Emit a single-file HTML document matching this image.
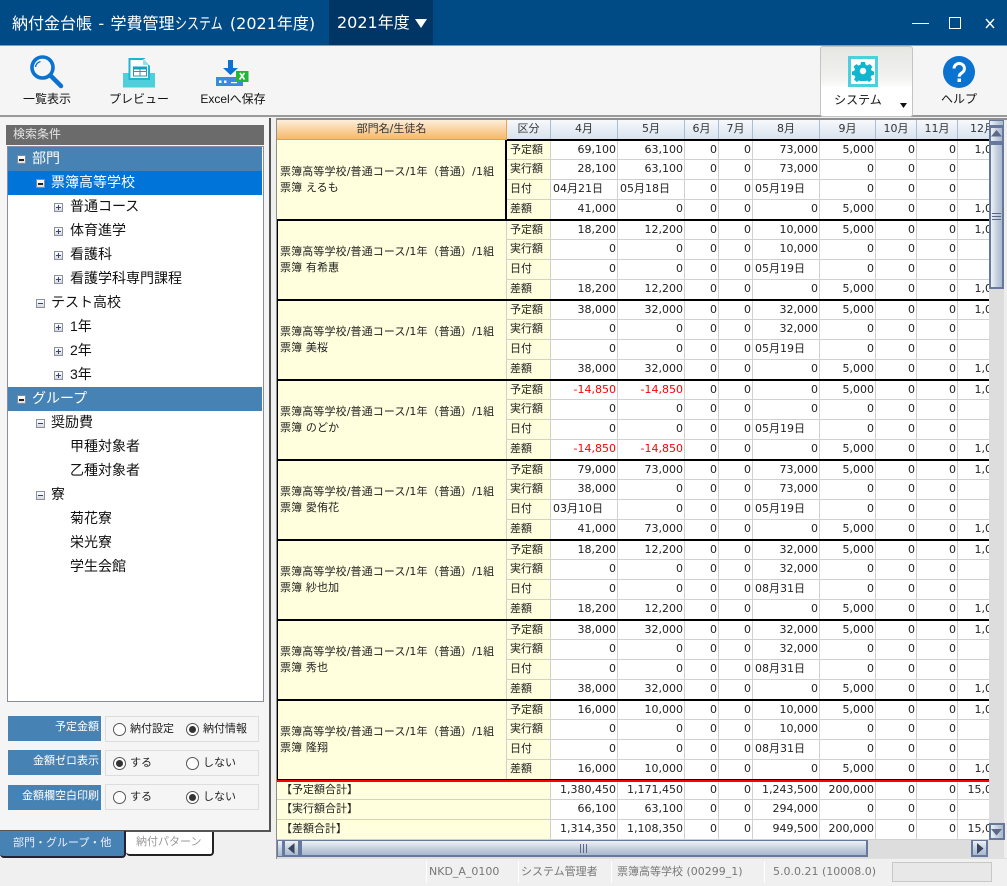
<!DOCTYPE html>
<html lang="ja"><head><meta charset="utf-8"><title>納付金台帳</title>
<style>
*{box-sizing:border-box}
html,body{margin:0;padding:0}
body{width:1007px;height:886px;position:relative;overflow:hidden;background:#f0f0f0;font-family:"DejaVu Sans","Noto Sans CJK JP",sans-serif;color:#111}
.a{position:absolute}
.j{font-family:"Liberation Sans","Noto Sans CJK JP",sans-serif}
.t{position:absolute;white-space:nowrap;line-height:1}
#title{left:0;top:0;width:1007px;height:45px;background:#004a85}
#tb{left:0;top:45px;width:1007px;height:72px;background:#f5f5f5;border-top:1px solid #8c9aa8;border-bottom:2px solid #9a9a9a}
.tl{font:12px/14px "Liberation Sans","Noto Sans CJK JP",sans-serif;color:#111;text-align:center;position:absolute;top:92px;white-space:nowrap}
#lp{left:0;top:118px;width:271px;height:714px;background:#f5f5f5;border-right:2px solid #555;border-bottom:2px solid #555}
#tree{left:7px;top:146px;width:257px;height:556px;background:#fff;border:1px solid #8a8d9c}
.r{position:absolute;left:8px;width:254px;height:24px;font:14px/22px "Liberation Sans","Noto Sans CJK JP",sans-serif;color:#111;white-space:nowrap}
.r span{position:absolute;top:0}
.r i{position:absolute;top:8px;width:9px;height:9px;border:1px solid #8b8f9e;background:linear-gradient(#fff,#d8dae2)}
.r i:before{content:"";position:absolute;left:1px;top:3px;width:5px;height:1px;background:#33457a}
.r i.p:after{content:"";position:absolute;left:3px;top:1px;width:1px;height:5px;background:#33457a}
.lv0 i{left:9px}.lv0 span{left:24px}
.lv1 i{left:28px}.lv1 span{left:43px}
.lv2 i{left:46px}.lv2 span{left:62px}
.h{background:#4682b4;color:#fff}.s{background:#0074d9;color:#fff}
.h i,.s i{background:linear-gradient(#fff,#ddd);border-color:#7f8aa0}
.h i:before,.s i:before{background:#222;height:2px}
.lab{position:absolute;left:8px;width:93px;height:25px;background:#4682b4;color:#fff;font:11px/23px "Liberation Sans","Noto Sans CJK JP",sans-serif;text-align:right;padding-right:2px;white-space:nowrap}
.box{position:absolute;left:105px;width:154px;height:26px;border:1px solid #ddd;background:#f5f5f5}
.rd{position:absolute;width:13px;height:13px;border-radius:50%;border:1px solid #555;background:#fff}
.rd.on:after{content:"";position:absolute;left:2px;top:2px;width:7px;height:7px;border-radius:50%;background:#333}
.rt{position:absolute;font:11px/14px "Liberation Sans","Noto Sans CJK JP",sans-serif;color:#222;white-space:nowrap}
#gw{left:276px;top:118px;width:731px;height:741px;border-top:2px solid #8f8f8f;border-left:1px solid #8f8f8f;background:#e0e0e0}
#gc{left:277px;top:120px;width:712px;height:720px;overflow:hidden;background:#fff}
table{border-collapse:separate;border-spacing:0;table-layout:fixed;width:731px;font:11px/14px "DejaVu Sans","Noto Sans CJK JP",sans-serif;color:#222}
td,th{height:20px;padding:0 1px 1px 0;border-right:1px solid #d0d0d0;border-bottom:1px solid #d0d0d0;text-align:right;white-space:nowrap;overflow:hidden;font-weight:normal}
tr:nth-child(4n+2) td:not(.n){padding-top:2px}
th{background:linear-gradient(#f7f9fc,#d8e2ee);border-right:1px solid #a6bdd3;border-bottom:1px solid #8aa4bf;text-align:center;padding:0 0 2px 0;color:#333}
th.o{background:linear-gradient(#fdeeda,#f6b868);border-bottom:1px solid #f59a2e;border-right:1px solid #f5a33e}
td.n{background:#ffffdd;text-align:left;padding:0 0 0 3px;line-height:16px;font-size:11px;letter-spacing:.12px}
td.k{background:#ffffdd;text-align:left;padding-left:3px;padding-right:0}
td.d{text-align:left;padding-left:2px}
td.m{color:#f00}
td.tt{background:#ffffdd;text-align:left;padding-left:4px;padding-right:0}
.bl{position:absolute;left:277px;width:712px;height:2px;background:#000}
.sb{background:linear-gradient(90deg,#eef2f7,#c3cfdf 55%,#aab8cc);border:solid #66789e;border-width:2px}
.sh{background:linear-gradient(#eef2f7,#c3cfdf 55%,#aab8cc);border:solid #66789e;border-width:1px 2px 2px}
.st{position:absolute;top:872px;transform:translateY(-50%);font:11px/14px "DejaVu Sans","Noto Sans CJK JP",sans-serif;color:#777;white-space:nowrap}
.sp{position:absolute;top:861px;width:1px;height:22px;background:#fff}
</style></head><body>

<div id="title" class="a"></div>
<div class="a" style="left:329px;top:0;width:104px;height:45px;background:#003666"></div>
<div class="t" style="left:12px;top:16px;font-size:16px;color:#fff;word-spacing:1.300px">納付金台帳 - 学費管理<span style="display:inline-block;width:49px;overflow:visible"><span style="display:inline-block;transform:scaleX(.75);transform-origin:0 50%">システム</span></span> (2021年度)</div>
<div class="t" style="left:337px;top:15px;font-size:16px;color:#fff">2021年度</div>
<svg class="a" style="left:415px;top:19px" width="12" height="9"><path d="M0 0H12L6 9Z" fill="#fff"/></svg>
<svg class="a" style="left:905px;top:10px" width="100" height="26" fill="none" stroke="#fff">
<path d="M7 13.500H24" stroke-width="1"/><rect x="44.500" y="7.500" width="11" height="11" stroke-width="1"/><path d="M81 9L89 18M89 9L81 18" stroke-width="1.400"/></svg>

<div id="tb" class="a"></div>
<svg class="a" style="left:26px;top:54px" width="40" height="36" fill="none">
<circle cx="16.500" cy="13.500" r="10.500" stroke="#0a72cf" stroke-width="3.600"/><path d="M9.500 13a7 7 0 0 1 5-5.500" stroke="#0a72cf" stroke-width="1.400"/><path d="M25 22L35 32" stroke="#0a72cf" stroke-width="4.500" stroke-linecap="round"/></svg>
<svg class="a" style="left:123px;top:58px" width="32" height="30">
<rect x="0" y="15" width="32" height="14.500" fill="#4dd0dc"/><path d="M6.500 1H21L26 6V21H6.500Z" fill="#fff" stroke="#1fb5cf" stroke-width="2"/><path d="M20 1L27 1 27 8Z" fill="#f5f5f5"/><path d="M20 2V7H26" fill="#8fe0ea"/><rect x="10.500" y="9" width="13" height="9" fill="#fff" stroke="#1a9fbf" stroke-width="1"/><path d="M10.500 13.500H23.500M17 9V18" stroke="#1a9fbf" stroke-width="1"/><rect x="11" y="9.500" width="12" height="2" fill="#1a9fbf"/></svg>
<div class="tl" style="left:20px;width:54px">一覧表示</div>
<div class="tl" style="left:109px;width:60px">プレビュー</div>
<div class="tl" style="left:198px;width:70px">Excelへ保存</div>
<svg class="a" style="left:216px;top:59px" width="34" height="28">
<path d="M12 1H17V9H22L14.500 16 7 9H12Z" fill="#0a72cf"/><rect x="0" y="18" width="27" height="9" fill="#3a8ae0"/><rect x="3" y="21.500" width="2.500" height="2.500" fill="#fff"/><rect x="8" y="21.500" width="2.500" height="2.500" fill="#fff"/><rect x="15" y="23" width="6" height="1.200" fill="#fff"/><rect x="20" y="12" width="12.500" height="11" fill="#1fb83a"/><path d="M23.500 20.500L28.500 14M24 14L28.500 20.500" stroke="#fff" stroke-width="1.600" fill="none"/></svg>

<div class="a" style="left:820px;top:46px;width:93px;height:71px;border:1px solid #c4c4c4;border-radius:3px;background:linear-gradient(#e6e6e3,#f2f2f0 45%,#fff 60%,#fff)"></div>
<svg class="a" style="left:848px;top:56px" width="31" height="31">
<rect x="1.500" y="1.500" width="27" height="28" fill="#fff" stroke="#4dd0dc" stroke-width="3"/>
<path d="M15 15.500m-3.200 0a3.200 3.200 0 1 0 6.400 0a3.200 3.200 0 1 0-6.400 0ZM13 6.500H17L17.600 9.200 19.400 10 21.800 8.600 24.500 11.300 23 13.600 23.800 15.400 26 16V19.500L23.400 20 22.600 21.800 24 24 21.200 26.500 19 25 17.200 25.800 16.800 25.500H13.200L12.800 25.800 11 25 8.800 26.500 6 24 7.400 21.800 6.600 20 4 19.500V16L6.200 15.400 7 13.600 5.500 11.300 8.200 8.600 10.600 10 12.400 9.200Z" fill="#10b5cf" fill-rule="evenodd" transform="translate(0 -.5)"/></svg>
<div class="tl" style="left:830px;width:56px;top:93px">システム</div>
<svg class="a" style="left:900px;top:103px" width="7" height="5"><path d="M0 0H7L3.500 5Z" fill="#111"/></svg>
<svg class="a" style="left:943px;top:56px" width="32" height="32"><circle cx="16" cy="16" r="16" fill="#0a72cf"/><path d="M11 12.500a5.200 5 0 1 1 8 4.200c-1.800 1.200-2.800 2-2.800 4" fill="none" stroke="#fff" stroke-width="3"/><rect x="14.500" y="22.500" width="3.500" height="3.500" fill="#fff"/></svg>
<div class="tl" style="left:937px;width:44px">ヘルプ</div>

<div id="lp" class="a"></div>
<div class="a" style="left:6px;top:125px;width:258px;height:20px;background:#6b6b6b"></div>
<div class="t j" style="left:13px;top:128px;font-size:12px;color:#e4e4e4">検索条件</div>
<div id="tree" class="a"></div>
<div class="r lv0 h" style="top:147px;height:24px"><i></i><span>部門</span></div>
<div class="r lv1 s" style="top:171px"><i></i><span>票簿高等学校</span></div>
<div class="r lv2" style="top:195px"><i class="p"></i><span>普通コース</span></div>
<div class="r lv2" style="top:219px"><i class="p"></i><span>体育進学</span></div>
<div class="r lv2" style="top:243px"><i class="p"></i><span>看護科</span></div>
<div class="r lv2" style="top:267px"><i class="p"></i><span>看護学科専門課程</span></div>
<div class="r lv1" style="top:291px"><i></i><span>テスト高校</span></div>
<div class="r lv2" style="top:315px"><i class="p"></i><span>1年</span></div>
<div class="r lv2" style="top:339px"><i class="p"></i><span>2年</span></div>
<div class="r lv2" style="top:363px"><i class="p"></i><span>3年</span></div>
<div class="r lv0 h" style="top:387px"><i></i><span>グループ</span></div>
<div class="r lv1" style="top:411px"><i></i><span>奨励費</span></div>
<div class="r lv2" style="top:435px"><span>甲種対象者</span></div>
<div class="r lv2" style="top:459px"><span>乙種対象者</span></div>
<div class="r lv1" style="top:483px"><i></i><span>寮</span></div>
<div class="r lv2" style="top:507px"><span>菊花寮</span></div>
<div class="r lv2" style="top:531px"><span>栄光寮</span></div>
<div class="r lv2" style="top:555px"><span>学生会館</span></div>

<div class="lab" style="top:716px">予定金額</div><div class="box" style="top:716px"></div>
<div class="rd" style="left:113px;top:723px"></div><div class="rt" style="left:130px;top:722px">納付設定</div>
<div class="rd on" style="left:186px;top:723px"></div><div class="rt" style="left:203px;top:722px">納付情報</div>
<div class="lab" style="top:750px">金額ゼロ表示</div><div class="box" style="top:750px"></div>
<div class="rd on" style="left:113px;top:757px"></div><div class="rt" style="left:130px;top:756px">する</div>
<div class="rd" style="left:186px;top:757px"></div><div class="rt" style="left:203px;top:756px">しない</div>
<div class="lab" style="top:785px">金額欄空白印刷</div><div class="box" style="top:784px"></div>
<div class="rd" style="left:113px;top:791px"></div><div class="rt" style="left:130px;top:790px">する</div>
<div class="rd on" style="left:186px;top:791px"></div><div class="rt" style="left:203px;top:790px">しない</div>

<div class="a" style="left:126px;top:832px;width:88px;height:24px;background:#fff;border-right:2px solid #222;border-bottom:2px solid #222;border-radius:0 0 4px 4px"></div>
<div class="t j" style="left:136px;top:837px;font-size:11px;color:#999">納付パターン</div>
<div class="a" style="left:0;top:831px;width:126px;height:27px;background:#4682b4;border-right:2px solid #223;border-bottom:2px solid #223;border-radius:0 0 4px 4px"></div>
<div class="t j" style="left:13px;top:838px;font-size:11px;color:#eef">部門・グループ・他</div>

<div id="gw" class="a"></div>
<div id="gc" class="a">
<table>
<colgroup><col style="width:230px"><col style="width:44px"><col style="width:67px"><col style="width:67px"><col style="width:34px"><col style="width:34px"><col style="width:67px"><col style="width:56px"><col style="width:41px"><col style="width:41px"><col style="width:50px"></colgroup>
<tr><th class="o">部門名/生徒名</th><th>区分</th><th>4月</th><th>5月</th><th>6月</th><th>7月</th><th>8月</th><th>9月</th><th>10月</th><th>11月</th><th>12月</th></tr>

<tr><td class="n" rowspan="4">票簿高等学校/普通コース/1年（普通）/1組<br>票簿 えるも</td><td class="k">予定額</td><td>69,100</td><td>63,100</td><td>0</td><td>0</td><td>73,000</td><td>5,000</td><td>0</td><td>0</td><td>1,000</td></tr>
<tr><td class="k">実行額</td><td>28,100</td><td>63,100</td><td>0</td><td>0</td><td>73,000</td><td>0</td><td>0</td><td>0</td><td></td></tr>
<tr><td class="k">日付</td><td class="d">04月21日</td><td class="d">05月18日</td><td>0</td><td>0</td><td class="d">05月19日</td><td>0</td><td>0</td><td>0</td><td></td></tr>
<tr><td class="k">差額</td><td>41,000</td><td>0</td><td>0</td><td>0</td><td>0</td><td>5,000</td><td>0</td><td>0</td><td>1,000</td></tr>

<tr><td class="n" rowspan="4">票簿高等学校/普通コース/1年（普通）/1組<br>票簿 有希惠</td><td class="k">予定額</td><td>18,200</td><td>12,200</td><td>0</td><td>0</td><td>10,000</td><td>5,000</td><td>0</td><td>0</td><td>1,000</td></tr>
<tr><td class="k">実行額</td><td>0</td><td>0</td><td>0</td><td>0</td><td>10,000</td><td>0</td><td>0</td><td>0</td><td></td></tr>
<tr><td class="k">日付</td><td>0</td><td>0</td><td>0</td><td>0</td><td class="d">05月19日</td><td>0</td><td>0</td><td>0</td><td></td></tr>
<tr><td class="k">差額</td><td>18,200</td><td>12,200</td><td>0</td><td>0</td><td>0</td><td>5,000</td><td>0</td><td>0</td><td>1,000</td></tr>

<tr><td class="n" rowspan="4">票簿高等学校/普通コース/1年（普通）/1組<br>票簿 美桜</td><td class="k">予定額</td><td>38,000</td><td>32,000</td><td>0</td><td>0</td><td>32,000</td><td>5,000</td><td>0</td><td>0</td><td>1,000</td></tr>
<tr><td class="k">実行額</td><td>0</td><td>0</td><td>0</td><td>0</td><td>32,000</td><td>0</td><td>0</td><td>0</td><td></td></tr>
<tr><td class="k">日付</td><td>0</td><td>0</td><td>0</td><td>0</td><td class="d">05月19日</td><td>0</td><td>0</td><td>0</td><td></td></tr>
<tr><td class="k">差額</td><td>38,000</td><td>32,000</td><td>0</td><td>0</td><td>0</td><td>5,000</td><td>0</td><td>0</td><td>1,000</td></tr>

<tr><td class="n" rowspan="4">票簿高等学校/普通コース/1年（普通）/1組<br>票簿 のどか</td><td class="k">予定額</td><td class="m">-14,850</td><td class="m">-14,850</td><td>0</td><td>0</td><td>0</td><td>5,000</td><td>0</td><td>0</td><td>1,000</td></tr>
<tr><td class="k">実行額</td><td>0</td><td>0</td><td>0</td><td>0</td><td>0</td><td>0</td><td>0</td><td>0</td><td></td></tr>
<tr><td class="k">日付</td><td>0</td><td>0</td><td>0</td><td>0</td><td class="d">05月19日</td><td>0</td><td>0</td><td>0</td><td></td></tr>
<tr><td class="k">差額</td><td class="m">-14,850</td><td class="m">-14,850</td><td>0</td><td>0</td><td>0</td><td>5,000</td><td>0</td><td>0</td><td>1,000</td></tr>

<tr><td class="n" rowspan="4">票簿高等学校/普通コース/1年（普通）/1組<br>票簿 愛侑花</td><td class="k">予定額</td><td>79,000</td><td>73,000</td><td>0</td><td>0</td><td>73,000</td><td>5,000</td><td>0</td><td>0</td><td>1,000</td></tr>
<tr><td class="k">実行額</td><td>38,000</td><td>0</td><td>0</td><td>0</td><td>73,000</td><td>0</td><td>0</td><td>0</td><td></td></tr>
<tr><td class="k">日付</td><td class="d">03月10日</td><td>0</td><td>0</td><td>0</td><td class="d">05月19日</td><td>0</td><td>0</td><td>0</td><td></td></tr>
<tr><td class="k">差額</td><td>41,000</td><td>73,000</td><td>0</td><td>0</td><td>0</td><td>5,000</td><td>0</td><td>0</td><td>1,000</td></tr>

<tr><td class="n" rowspan="4">票簿高等学校/普通コース/1年（普通）/1組<br>票簿 紗也加</td><td class="k">予定額</td><td>18,200</td><td>12,200</td><td>0</td><td>0</td><td>32,000</td><td>5,000</td><td>0</td><td>0</td><td>1,000</td></tr>
<tr><td class="k">実行額</td><td>0</td><td>0</td><td>0</td><td>0</td><td>32,000</td><td>0</td><td>0</td><td>0</td><td></td></tr>
<tr><td class="k">日付</td><td>0</td><td>0</td><td>0</td><td>0</td><td class="d">08月31日</td><td>0</td><td>0</td><td>0</td><td></td></tr>
<tr><td class="k">差額</td><td>18,200</td><td>12,200</td><td>0</td><td>0</td><td>0</td><td>5,000</td><td>0</td><td>0</td><td>1,000</td></tr>

<tr><td class="n" rowspan="4">票簿高等学校/普通コース/1年（普通）/1組<br>票簿 秀也</td><td class="k">予定額</td><td>38,000</td><td>32,000</td><td>0</td><td>0</td><td>32,000</td><td>5,000</td><td>0</td><td>0</td><td>1,000</td></tr>
<tr><td class="k">実行額</td><td>0</td><td>0</td><td>0</td><td>0</td><td>32,000</td><td>0</td><td>0</td><td>0</td><td></td></tr>
<tr><td class="k">日付</td><td>0</td><td>0</td><td>0</td><td>0</td><td class="d">08月31日</td><td>0</td><td>0</td><td>0</td><td></td></tr>
<tr><td class="k">差額</td><td>38,000</td><td>32,000</td><td>0</td><td>0</td><td>0</td><td>5,000</td><td>0</td><td>0</td><td>1,000</td></tr>

<tr><td class="n" rowspan="4">票簿高等学校/普通コース/1年（普通）/1組<br>票簿 隆翔</td><td class="k">予定額</td><td>16,000</td><td>10,000</td><td>0</td><td>0</td><td>10,000</td><td>5,000</td><td>0</td><td>0</td><td>1,000</td></tr>
<tr><td class="k">実行額</td><td>0</td><td>0</td><td>0</td><td>0</td><td>10,000</td><td>0</td><td>0</td><td>0</td><td></td></tr>
<tr><td class="k">日付</td><td>0</td><td>0</td><td>0</td><td>0</td><td class="d">08月31日</td><td>0</td><td>0</td><td>0</td><td></td></tr>
<tr><td class="k">差額</td><td>16,000</td><td>10,000</td><td>0</td><td>0</td><td>0</td><td>5,000</td><td>0</td><td>0</td><td>1,000</td></tr>

<tr><td class="tt" colspan="2">【予定額合計】</td><td>1,380,450</td><td>1,171,450</td><td>0</td><td>0</td><td>1,243,500</td><td>200,000</td><td>0</td><td>0</td><td>15,000</td></tr>
<tr><td class="tt" colspan="2">【実行額合計】</td><td>66,100</td><td>63,100</td><td>0</td><td>0</td><td>294,000</td><td>0</td><td>0</td><td>0</td><td></td></tr>
<tr><td class="tt" colspan="2">【差額合計】</td><td>1,314,350</td><td>1,108,350</td><td>0</td><td>0</td><td>949,500</td><td>200,000</td><td>0</td><td>0</td><td>15,000</td></tr>
</table>
</div>

<!-- grid overlay lines -->
<div class="a" style="left:507px;top:139px;width:482px;height:2px;background:#000"></div>
<div class="a" style="left:505px;top:140px;width:2px;height:79px;background:#000"></div>
<div class="bl" style="top:219px"></div><div class="bl" style="top:299px"></div><div class="bl" style="top:379px"></div><div class="bl" style="top:459px"></div><div class="bl" style="top:539px"></div><div class="bl" style="top:619px"></div><div class="bl" style="top:699px"></div>
<div class="a" style="left:277px;top:220px;width:1px;height:560px;background:#000"></div>
<div class="a" style="left:277px;top:779px;width:712px;height:3px;background:#f00;border-top:1px solid #000"></div>

<!-- vertical scrollbar -->
<div class="a" style="left:989px;top:120px;width:15px;height:720px;background:#ddd"></div>
<div class="a" style="left:1004px;top:120px;width:3px;height:738px;background:#eee"></div>
<div class="a sb" style="left:989px;top:120px;width:15px;height:6px;border-width:1px"></div>
<div class="a sb" style="left:989px;top:126px;width:15px;height:17px"></div>
<svg class="a" style="left:991px;top:130px" width="11" height="8"><path d="M5.500 0L11 6.500H0Z" fill="#5a6a86"/></svg>
<div class="a sb" style="left:989px;top:143px;width:15px;height:146px"></div>
<svg class="a" style="left:992px;top:213px" width="9" height="9"><path d="M0 .5H9M0 3.500H9M0 6.500H9" stroke="#5a6a86"/></svg>
<div class="a sb" style="left:989px;top:823px;width:16px;height:17px"></div>
<svg class="a" style="left:991px;top:829px" width="11" height="7"><path d="M0 0H11L5.500 6.500Z" fill="#5a6a86"/></svg>

<!-- horizontal scrollbar -->
<div class="a" style="left:277px;top:840px;width:712px;height:18px;background:#ddd"></div>
<div class="a sh" style="left:277px;top:840px;width:6px;height:17px;border-width:1px"></div>
<div class="a sh" style="left:283px;top:840px;width:17px;height:17px"></div>
<svg class="a" style="left:288px;top:843px" width="7" height="11"><path d="M0 5.500L6.500 0V11Z" fill="#39455e"/></svg>
<div class="a sh" style="left:300px;top:840px;width:568px;height:17px"></div>
<svg class="a" style="left:580px;top:844px" width="9" height="9"><path d="M.5 0V9M3.500 0V9M6.500 0V9" stroke="#5a6a86"/></svg>
<div class="a sh" style="left:971px;top:840px;width:17px;height:17px"></div>
<svg class="a" style="left:977px;top:843px" width="7" height="11"><path d="M0 0L6.500 5.500 0 11Z" fill="#39455e"/></svg>

<!-- status bar -->
<div class="sp" style="left:426px"></div><div class="sp" style="left:518px"></div><div class="sp" style="left:611px"></div><div class="sp" style="left:764px"></div>
<div class="st" style="left:429px">NKD_A_0100</div>
<div class="st" style="left:521px">システム管理者</div>
<div class="st" style="left:617px">票簿高等学校 (00299_1)</div>
<div class="st" style="left:773px">5.0.0.21 (10008.0)</div>
<div class="a" style="left:892px;top:862px;width:100px;height:20px;background:#e8e8e8;border:1px solid #c8c8c8"></div>
</body></html>
